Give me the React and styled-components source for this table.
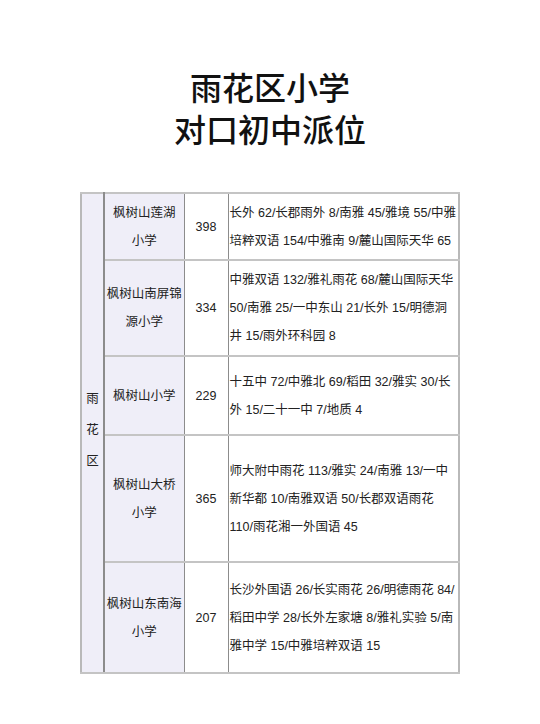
import React from "react";
import styled, { createGlobalStyle } from "styled-components";

const Global = createGlobalStyle`
  html, body { margin: 0; padding: 0; background: #ffffff; }
  body { font-family: "Liberation Sans", "Noto Sans CJK SC", sans-serif; color: #222; }
`;

const Page = styled.div`
  width: 540px;
  min-height: 724px;
  padding-top: 65px;
  box-sizing: border-box;
  display: flex;
  flex-direction: column;
  align-items: center;
`;

const Title = styled.h1`
  margin: 0 0 43px;
  font-family: "Noto Sans CJK SC", sans-serif;
  font-weight: 500;
  font-size: 32px;
  line-height: 42px;
  color: #111;
  text-align: center;
`;

const Table = styled.table`
  width: 378px;
  table-layout: fixed;
  border-collapse: collapse;
  border: 2px solid #b9b9b9;
  font-size: 12.5px;
  line-height: 28px;
  color: #222;
`;

const Row = styled.tr`
  height: ${(p) => p.$h}px;
`;

const Cell = styled.td`
  padding: ${(p) => (p.$left ? "0 0 0 1px" : "0")};
  background: ${(p) => (p.$tint ? "#efeef8" : "#ffffff")};
  text-align: ${(p) => (p.$left ? "left" : "center")};
  vertical-align: middle;
  white-space: nowrap;
  overflow: hidden;
  border-top: 2px solid #c4c4c4;
  border-bottom: 2px solid #c4c4c4;
  border-left: 1px solid #8c8c8c;
  border-right: 1px solid #8c8c8c;
`;

const DistrictCell = styled(Cell)`
  line-height: 31px;
  border-right: 2px solid #8c8c8c;
  padding-bottom: 6px;
`;

const rows = [
  { h: 67, school: ["枫树山莲湖", "小学"], n: 398, list: ["长外 62/长郡雨外 8/南雅 45/雅境 55/中雅", "培粹双语 154/中雅南 9/麓山国际天华 65"] },
  { h: 96, school: ["枫树山南屏锦", "源小学"], n: 334, list: ["中雅双语 132/雅礼雨花 68/麓山国际天华", "50/南雅 25/一中东山 21/长外 15/明德洞", "井 15/雨外环科园 8"] },
  { h: 79, school: ["枫树山小学"], n: 229, list: ["十五中 72/中雅北 69/稻田 32/雅实 30/长", "外 15/二十一中 7/地质 4"] },
  { h: 127, school: ["枫树山大桥", "小学"], n: 365, list: ["师大附中雨花 113/雅实 24/南雅 13/一中", "新华都 10/南雅双语 50/长郡双语雨花", "110/雨花湘一外国语 45"] },
  { h: 111, school: ["枫树山东南海", "小学"], n: 207, list: ["长沙外国语 26/长实雨花 26/明德雨花 84/", "稻田中学 28/长外左家塘 8/雅礼实验 5/南", "雅中学 15/中雅培粹双语 15"] },
];

const Lines = ({ items }) =>
  items.map((t, i) => (
    <React.Fragment key={i}>
      {i > 0 && <br />}
      {t}
    </React.Fragment>
  ));

export default function App() {
  return (
    <>
      <Global />
      <Page>
        <Title>
          雨花区小学
          <br />
          对口初中派位
        </Title>
        <Table>
          <colgroup>
            <col style={{ width: 23 }} />
            <col style={{ width: 80 }} />
            <col style={{ width: 44 }} />
            <col style={{ width: 231 }} />
          </colgroup>
          <tbody>
            {rows.map((r, i) => (
              <Row key={i} $h={r.h}>
                {i === 0 && (
                  <DistrictCell $tint rowSpan={rows.length}>
                    雨<br />花<br />区
                  </DistrictCell>
                )}
                <Cell $tint>
                  <Lines items={r.school} />
                </Cell>
                <Cell>{r.n}</Cell>
                <Cell $left>
                  <Lines items={r.list} />
                </Cell>
              </Row>
            ))}
          </tbody>
        </Table>
      </Page>
    </>
  );
}
